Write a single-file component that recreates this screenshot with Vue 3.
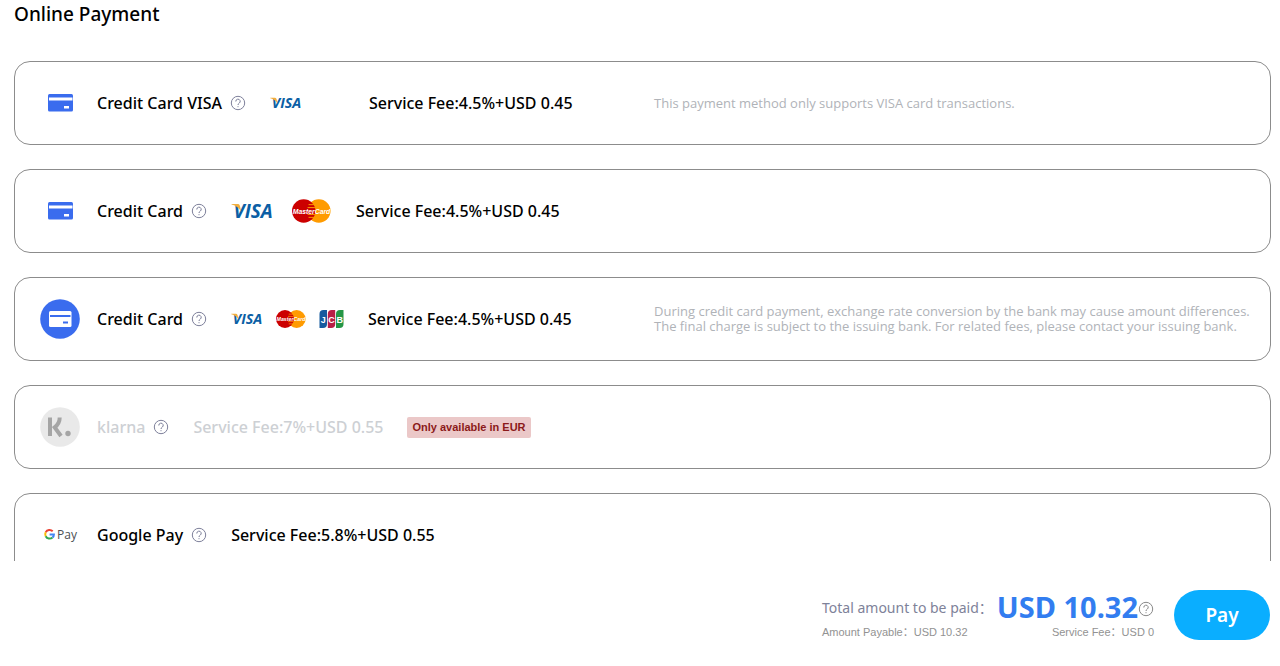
<script setup>
const methods = [
  { id: 'visa', name: 'Credit Card VISA', icon: 'card', logos: ['visa'], size: 'solo', fee: '4.5%+USD 0.45', note: ['This payment method only supports VISA card transactions.'] },
  { id: 'card', name: 'Credit Card', icon: 'card', logos: ['visa', 'mastercard'], size: 'large', fee: '4.5%+USD 0.45' },
  { id: 'card-global', name: 'Credit Card', icon: 'round', logos: ['visa', 'mastercard', 'jcb'], size: 'small', fee: '4.5%+USD 0.45', note: ['During credit card payment, exchange rate conversion by the bank may cause amount differences.', 'The final charge is subject to the issuing bank. For related fees, please contact your issuing bank.'] },
  { id: 'klarna', name: 'klarna', icon: 'klarna', logos: [], fee: '7%+USD 0.55', disabled: true, tag: 'Only available in EUR' },
  { id: 'gpay', name: 'Google Pay', icon: 'gpay', logos: [], fee: '5.8%+USD 0.55' },
]
</script>

<template>
  <main class="page">
    <h1 class="title">Online Payment</h1>
    <ul class="list">
      <li v-for="m in methods" :key="m.id" class="row" :class="{ disabled: m.disabled }">
        <div class="info">
          <svg v-if="m.icon === 'card'" class="icon" viewBox="0 0 40 40" aria-hidden="true">
            <rect x="8" y="11" width="25" height="17.5" rx="1.5" fill="#3a6cee" />
            <rect x="9" y="14.5" width="23.500" height="3" fill="#fff" />
            <rect x="24" y="23" width="5" height="2.5" fill="#fff" />
          </svg>
          <svg v-else-if="m.icon === 'round'" class="icon" viewBox="0 0 40 40" aria-hidden="true">
            <circle cx="20" cy="20" r="19.8" fill="#3a6cee" />
            <rect x="9" y="12" width="22.5" height="16" rx="1.5" fill="#fff" />
            <rect x="10" y="16" width="20.5" height="2" fill="#3a6cee" />
            <rect x="23" y="22.5" width="5" height="2" fill="#3a6cee" />
          </svg>
          <svg v-else-if="m.icon === 'klarna'" class="icon" viewBox="0 0 40 40" aria-hidden="true">
            <circle cx="20" cy="20" r="19.8" fill="#e9e9e9" />
            <rect x="8" y="10.500" width="4" height="18.500" fill="#a5a5a5" />
            <path d="M19.700 10.500C19.700 14.500 18.200 17.600 14.700 20.300L21 29" fill="none" stroke="#a5a5a5" stroke-width="4" />
            <circle cx="28" cy="26.500" r="2.700" fill="#a5a5a5" />
          </svg>
          <svg v-else class="icon" viewBox="0 0 40 40" aria-hidden="true">
            <g fill="none" stroke-width="2">
              <path d="M12.700 16.300A4.400 4.400 0 0 0 5.700 17.200" stroke="#ea4335" />
              <path d="M5.700 17.200A4.400 4.400 0 0 0 5.700 21.200" stroke="#fbbc04" />
              <path d="M5.700 21.200A4.400 4.400 0 0 0 12.500 22.500" stroke="#34a853" />
              <path d="M12.500 22.500Q13.900 21.300 13.900 19.500H9.600" stroke="#4285f4" />
            </g>
            <text x="17" y="24" class="gpay-word">Pay</text>
          </svg>

          <span class="name">{{ m.name }}</span>
          <button class="help" type="button" :aria-label="`About ${m.name}`">
            <svg viewBox="0 0 16 16" aria-hidden="true">
              <circle cx="8" cy="8" r="6.700" />
              <path d="M5.800 6.500A2.200 2.200 0 1 1 9.200 8.200Q8 8.900 8 10M8 11.200V12.200" />
            </svg>
          </button>

          <span v-if="m.logos.length" class="logos" :class="m.size">
            <template v-for="l in m.logos" :key="l">
              <svg v-if="l === 'visa'" class="visa" viewBox="0 0 42 16" role="img" aria-label="VISA">
                <text x="2" y="15" class="visa-word">VISA</text>
                <path d="M0 1H6.500Q8 1 8.500 3L9.700 9Q7 3 0 1.500Z" fill="#f2ae3d" />
              </svg>
              <svg v-else-if="l === 'mastercard'" class="mastercard" viewBox="0 0 42 24" role="img" aria-label="MasterCard">
                <circle cx="28.500" cy="12" r="12" fill="#ff9b00" />
                <circle cx="13" cy="12" r="12" fill="#cc0000" />
                <path d="M18 5.500H23.500M17 8.500H24.500M17 15.500H24.500M18 18.500H23.500" stroke="#ff9b00" stroke-width="1" />
                <text x="21" y="15" class="mc-word">MasterCard</text>
              </svg>
              <svg v-else class="jcb" viewBox="0 0 24 18" role="img" aria-label="JCB">
                <path d="M0 18V4Q0 0 4 0H7.500V14Q7.500 18 3.500 18Z" fill="#155a9e" />
                <path d="M8.300 18V4Q8.300 0 12.300 0H15.700V14Q15.700 18 11.700 18Z" fill="#b81f46" />
                <path d="M16.500 18V4Q16.500 0 20.500 0H24V14Q24 18 20 18Z" fill="#259645" />
                <g class="jcb-word">
                  <text x="3.800" y="12.800">J</text>
                  <text x="12" y="12.800">C</text>
                  <text x="20.200" y="12.800">B</text>
                </g>
              </svg>
            </template>
          </span>

          <span class="fee">Service Fee:{{ m.fee }}</span>
          <span v-if="m.tag" class="tag">{{ m.tag }}</span>
        </div>
        <p v-if="m.note" class="note">
          <span v-for="line in m.note" :key="line">{{ line }}</span>
        </p>
      </li>
    </ul>

    <footer class="footer">
      <div class="summary">
        <div class="total">
          <span class="total-label">Total amount to be paid：</span>
          <strong class="amount">USD 10.32</strong>
          <button class="help" type="button" aria-label="About the total amount">
            <svg viewBox="0 0 16 16" aria-hidden="true">
              <circle cx="8" cy="8" r="6.700" />
              <path d="M5.800 6.500A2.200 2.200 0 1 1 9.200 8.200Q8 8.900 8 10M8 11.200V12.200" />
            </svg>
          </button>
        </div>
        <div class="breakdown">
          <span>Amount Payable：USD 10.32</span>
          <span>Service Fee：USD 0</span>
        </div>
      </div>
      <button class="pay" type="button">Pay</button>
    </footer>
  </main>
</template>

<style>
body {
  margin: 0;
  background: #fff;
}
</style>

<style scoped>
.page {
  display: flex;
  flex-direction: column;
  height: 100vh;
  box-sizing: border-box;
  padding: 0 9px 0 14px;
  overflow: hidden;
  font-family: "Noto Sans", "Noto Sans CJK SC", sans-serif;
  color: #000;
}
.title {
  flex: none;
  margin: 0 0 32px;
  font-size: 19px;
  line-height: 29px;
  font-weight: 500;
}
.list {
  flex: 1;
  min-height: 0;
  margin: 0;
  padding: 0;
  overflow: hidden;
  list-style: none;
}
.row {
  display: flex;
  align-items: center;
  box-sizing: border-box;
  height: 84px;
  margin-bottom: 24px;
  padding: 0 8px 0 25px;
  border: 1px solid #8c8c8c;
  border-radius: 16px;
}
.info {
  display: flex;
  align-items: center;
  flex: none;
  width: 614px;
  font-size: 16px;
  line-height: 24px;
  font-weight: 500;
  white-space: nowrap;
}
.icon {
  width: 40px;
  height: 40px;
  margin-right: 17px;
}
.help {
  display: flex;
  flex: none;
  width: 16px;
  height: 16px;
  margin: 0 0 0 8px;
  padding: 0;
  border: 0;
  background: none;
  color: #7d7f9a;
  cursor: pointer;
}
.help svg {
  width: 16px;
  height: 16px;
  fill: none;
  stroke: currentColor;
  stroke-width: 1;
}
.logos {
  display: flex;
  align-items: center;
  margin-left: 24px;
}
.solo,
.small {
  gap: 12px;
}
.solo {
  width: 75px;
}
.large {
  gap: 17px;
}
.visa {
  width: 32px;
  height: 12px;
  overflow: visible;
}
.mastercard {
  width: 32px;
  height: 18px;
}
.jcb {
  width: 25px;
  height: 18px;
}
.large .visa {
  width: 43px;
  height: 16px;
}
.large .mastercard {
  width: 41px;
  height: 24px;
}
.visa-word {
  font: italic 700 19px "Open Sans", sans-serif;
  fill: #0b5fa5;
}
.mc-word {
  font: italic 700 7px "Liberation Sans", sans-serif;
  fill: #fff;
  text-anchor: middle;
}
.jcb-word {
  font: 700 9px "Liberation Sans", sans-serif;
  fill: #fff;
  text-anchor: middle;
}
.gpay-word {
  font: 400 12px "Open Sans", sans-serif;
  fill: #4c4f53;
}
.fee {
  margin-left: 24px;
}
.disabled .name,
.disabled .fee {
  color: #cdd0d4;
}
.tag {
  margin-left: 24px;
  padding: 0 5px;
  border-radius: 2px;
  background: #ebc8c8;
  color: #8b1a1a;
  font: 700 11px/21px "Liberation Sans", sans-serif;
}
.note {
  margin: 0;
  color: #b0b3b8;
  font-family: "Open Sans", sans-serif;
  font-size: 13px;
  line-height: 15px;
}
.note span {
  display: block;
}
.footer {
  display: flex;
  flex: none;
  align-items: center;
  justify-content: flex-end;
  gap: 20px;
  height: 105px;
  box-sizing: border-box;
  padding: 3px 1px 0 0;
}
.summary {
  width: 332px;
}
.total {
  display: flex;
  align-items: center;
  height: 34px;
  white-space: nowrap;
}
.total-label {
  width: 175px;
  color: #7e8299;
  font-size: 14px;
}
.amount {
  color: #327df0;
  font-size: 29px;
  line-height: 34px;
  font-weight: 700;
}
.total .help {
  margin: 4px 0 0;
  color: #888;
}
.breakdown {
  display: flex;
  justify-content: space-between;
  color: #929292;
  font: 400 11px/16px "Liberation Sans", "Noto Sans CJK SC", sans-serif;
}
.pay {
  width: 96px;
  height: 50px;
  padding: 0;
  border: 0;
  border-radius: 25px;
  background: #0aaeff;
  color: #fff;
  font: 600 19px "Noto Sans", sans-serif;
  cursor: pointer;
}
</style>
